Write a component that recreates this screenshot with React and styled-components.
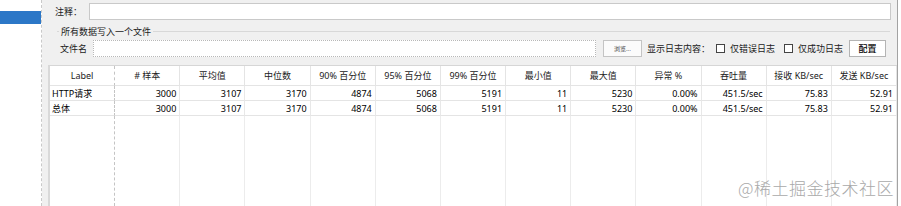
import React from 'react';
import styled, { createGlobalStyle } from 'styled-components';

const GlobalStyle = createGlobalStyle`
  html, body {
    margin: 0;
    padding: 0;
    background: #ffffff;
  }
  body {
    font-family: "Noto Sans", "Noto Sans CJK SC", sans-serif;
    font-size: 9px;
    color: #1a1a1a;
  }
`;

const columns = [
  'Label', '# 样本', '平均值', '中位数', '90% 百分位', '95% 百分位', '99% 百分位',
  '最小值', '最大值', '异常 %', '吞吐量', '接收 KB/sec', '发送 KB/sec',
];

const rows = [
  ['HTTP请求', '3000', '3107', '3170', '4874', '5068', '5191', '11', '5230', '0.00%', '451.5/sec', '75.83', '52.91'],
  ['总体', '3000', '3107', '3170', '4874', '5068', '5191', '11', '5230', '0.00%', '451.5/sec', '75.83', '52.91'],
];

const App = () => {
  return (
    <>
      <GlobalStyle />
      <Window>
        <Sidebar>
          <Selected />
        </Sidebar>
        <Main>
          <CommentRow>
            <FieldLabel width={34}>注释：</FieldLabel>
            <TextInput />
          </CommentRow>
          <GroupTitle>
            <GroupLine short />
            <span>所有数据写入一个文件</span>
            <GroupLine />
          </GroupTitle>
          <FileRow>
            <FieldLabel width={33}>文件名</FieldLabel>
            <TextInput dotted />
            <BrowseButton>浏览...</BrowseButton>
            <PlainLabel>显示日志内容：</PlainLabel>
            <Check />
            <PlainLabel>仅错误日志</PlainLabel>
            <Check style={{ marginLeft: 9 }} />
            <PlainLabel>仅成功日志</PlainLabel>
            <ConfigButton>配置</ConfigButton>
          </FileRow>
          <Table>
            {columns.map((c, i) => (
              <HeadCell key={c} first={i === 0}>{c}</HeadCell>
            ))}
            {rows.map((r) =>
              r.map((v, i) => (
                <BodyCell key={r[0] + i} first={i === 0}>{v}</BodyCell>
              ))
            )}
            {columns.map((c, i) => (
              <FillCell key={'f' + c} first={i === 0} />
            ))}
          </Table>
          <Watermark>@稀土掘金技术社区</Watermark>
        </Main>
        <Edge />
      </Window>
    </>
  );
};

export default App;

const Window = styled.div`
  display: flex;
  height: 206px;
  width: 901px;
  overflow: hidden;
`;

const Sidebar = styled.div`
  width: 41px;
  background: #ffffff;
  border-right: 1px dashed #c9c9c9;
  padding-top: 11px;
  box-sizing: content-box;
`;

const Selected = styled.div`
  height: 13px;
  background: #2c77c7;
`;

const Main = styled.div`
  position: relative;
  width: 855px;
  background: #f0f0f0;
  border-right: 1px solid #a3a3a3;
  display: flex;
  flex-direction: column;
`;

const Edge = styled.div`
  flex: 1;
  background: #ffffff;
`;

const CommentRow = styled.div`
  display: flex;
  align-items: center;
  height: 17px;
  margin-top: 3px;
  padding-left: 13px;
  padding-right: 6px;
`;

const FieldLabel = styled.div`
  width: ${(p) => p.width}px;
  flex-shrink: 0;
  font-family: "Noto Sans CJK SC", sans-serif;
  font-size: 9px;
  color: #1a1a1a;
`;

const TextInput = styled.div`
  flex: 1;
  height: 17px;
  box-sizing: border-box;
  background: #ffffff;
  border: 1px ${(p) => (p.dotted ? 'dotted #b8b8b8' : 'solid #c9c9c9')};
`;

const GroupTitle = styled.div`
  display: flex;
  align-items: center;
  gap: 2px;
  height: 11px;
  margin-top: 6px;
  padding-left: 15px;
  padding-right: 7px;
  font-family: "Noto Sans CJK SC", sans-serif;
  font-size: 9px;
  color: #1a1a1a;
`;

const GroupLine = styled.div`
  height: 1px;
  background: #d8d8d8;
  ${(p) => (p.short ? 'width: 2px;' : 'flex: 1;')}
`;

const FileRow = styled.div`
  display: flex;
  align-items: center;
  height: 17px;
  margin-top: 3px;
  padding-left: 18px;
  padding-right: 11px;
`;

const BrowseButton = styled.div`
  width: 39px;
  height: 17px;
  box-sizing: border-box;
  margin-left: 7px;
  border: 1px solid #c4c4c4;
  background: #fbfbfb;
  display: flex;
  align-items: center;
  justify-content: center;
  font-family: "Noto Sans CJK SC", sans-serif;
  font-size: 6px;
  color: #444;
`;

const PlainLabel = styled.div`
  margin-left: 5px;
  font-family: "Noto Sans CJK SC", sans-serif;
  font-size: 9px;
  color: #1a1a1a;
  white-space: nowrap;
`;

const Check = styled.div`
  width: 9px;
  height: 9px;
  margin-left: 6px;
  box-sizing: border-box;
  background: #ffffff;
  border: 1px solid #444;
`;

const ConfigButton = styled.div`
  width: 37px;
  height: 17px;
  box-sizing: border-box;
  margin-left: 6px;
  border: 1px solid #b4b4b4;
  background: #ffffff;
  display: flex;
  align-items: center;
  justify-content: center;
  font-family: "Noto Sans CJK SC", sans-serif;
  font-size: 9px;
  font-weight: 500;
  color: #000;
`;

const Table = styled.div`
  flex: 1;
  margin-top: 8px;
  margin-left: 6px;
  display: grid;
  grid-template-columns: repeat(13, 1fr);
  grid-template-rows: 20px 15px 15px 1fr;
  background: #ffffff;
  border-top: 1px solid #d6d6d6;
  border-left: 2px solid #d9d9d9;
`;

const HeadCell = styled.div`
  display: flex;
  align-items: center;
  justify-content: center;
  border-right: 1px ${(p) => (p.first ? 'dashed #c4c4c4' : 'solid #e4e4e4')};
  border-bottom: 1px solid #e4e4e4;
  font-family: "Noto Sans", "Noto Sans CJK SC", sans-serif;
  font-size: 9px;
  color: #222;
  white-space: nowrap;
`;

const BodyCell = styled.div`
  display: flex;
  align-items: center;
  justify-content: ${(p) => (p.first ? 'flex-start' : 'flex-end')};
  padding: 0 3px 0 2px;
  border-right: 1px ${(p) => (p.first ? 'dashed #c4c4c4' : 'solid #e8e8e8')};
  border-bottom: 1px solid #e4e4e4;
  font-family: "Noto Sans", "Noto Sans CJK SC", sans-serif;
  font-size: 9px;
  color: #000;
  white-space: nowrap;
`;

const FillCell = styled.div`
  border-right: 1px ${(p) => (p.first ? 'dashed #c4c4c4' : 'solid #ececec')};
`;

const Watermark = styled.div`
  position: absolute;
  right: 3px;
  bottom: 6px;
  font-family: "Noto Sans CJK SC", sans-serif;
  font-size: 17px;
  font-weight: 300;
  color: #a9a9a9;
  letter-spacing: 0.5px;
`;
